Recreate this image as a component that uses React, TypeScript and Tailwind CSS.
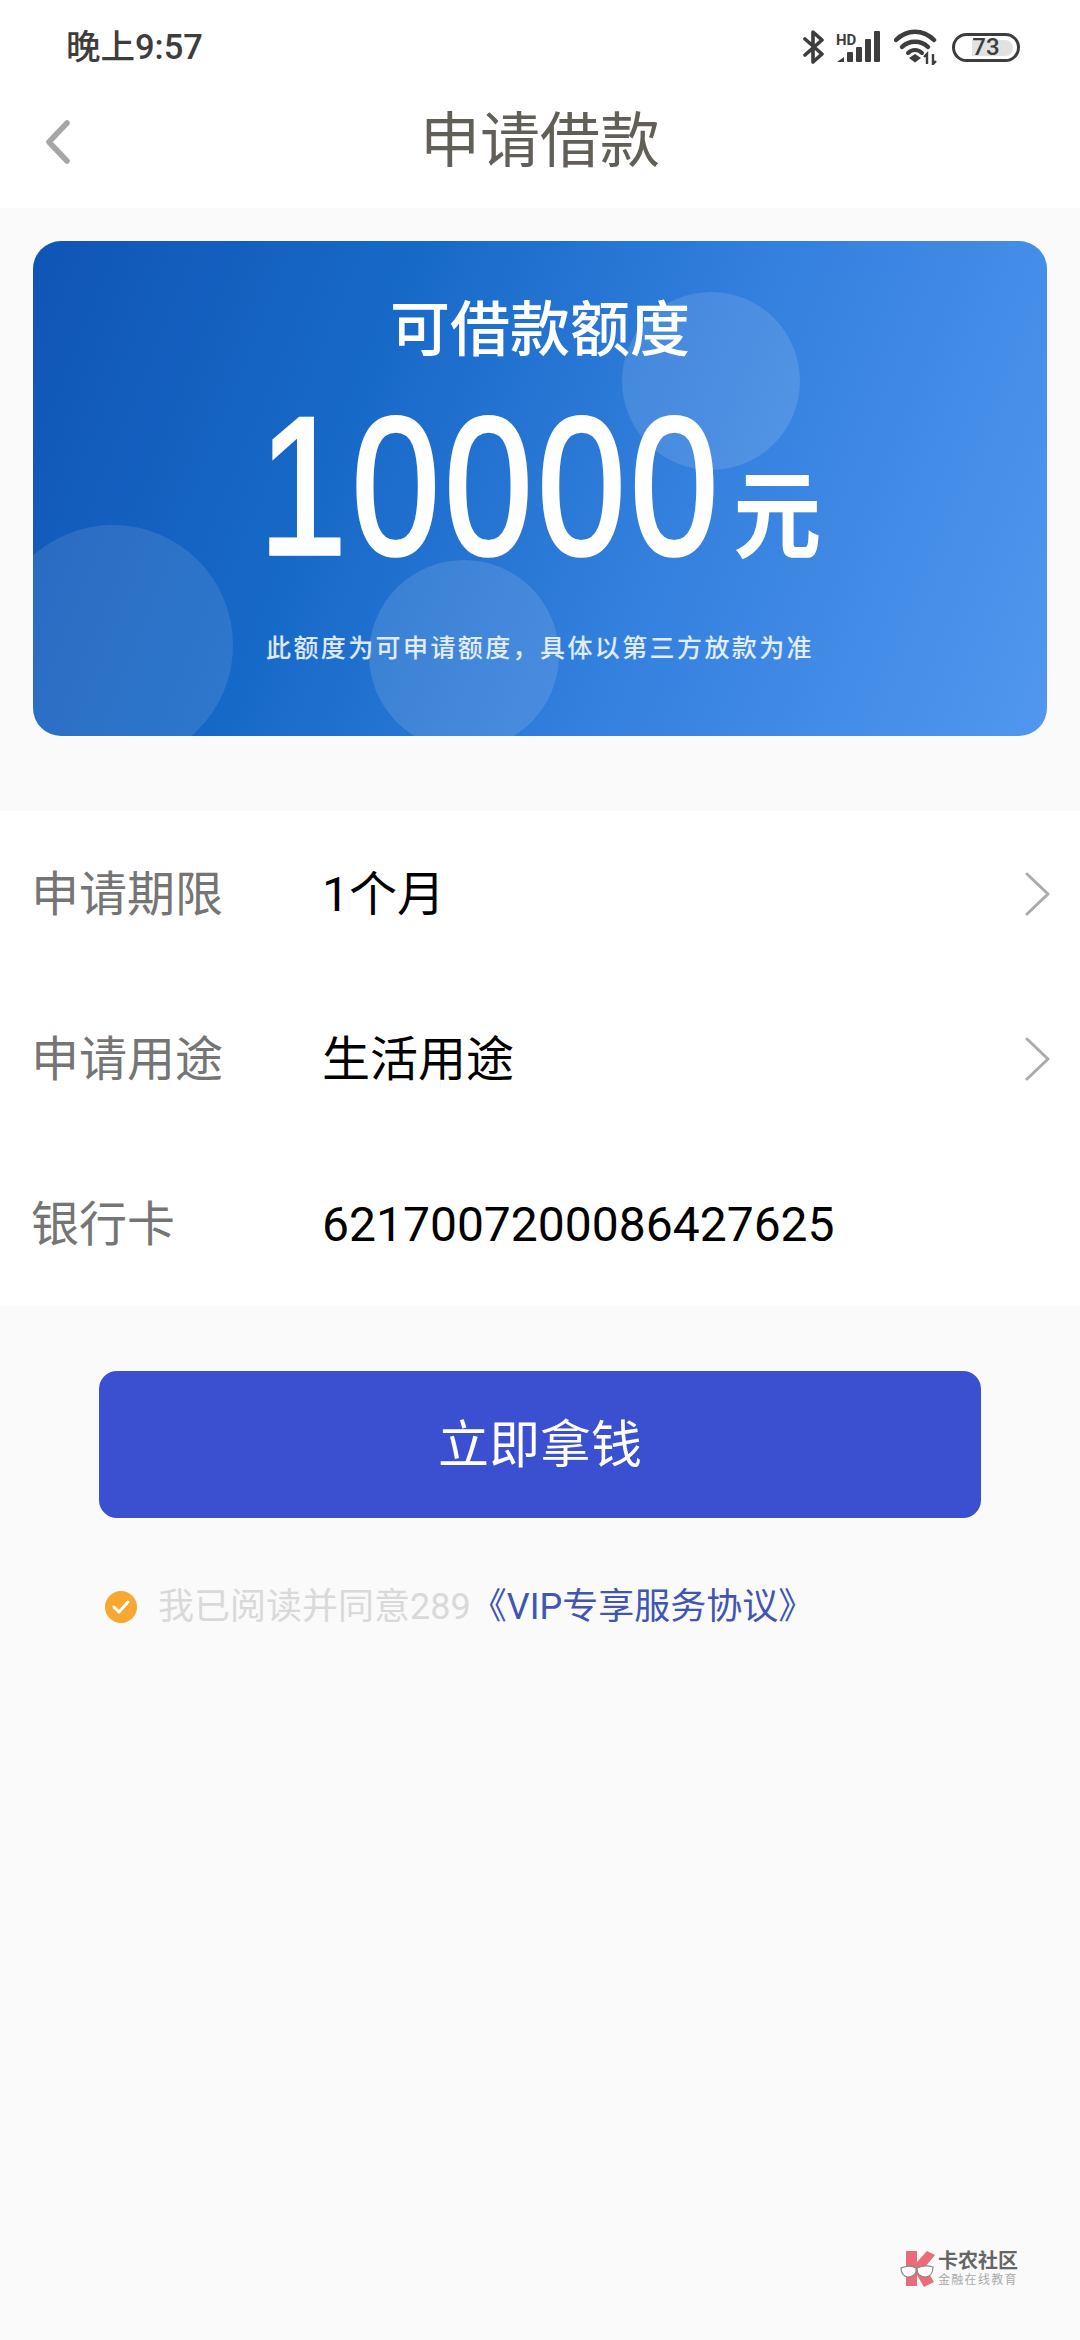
const CJK = "font-['Roboto','Noto_Sans_CJK_SC',sans-serif]";

const StatusIcons = () => (
  <div className="flex items-center text-[#3d3d3d]">
    <svg width="22" height="36" viewBox="0 0 22 36" fill="none" stroke="currentColor" strokeWidth="3.6" strokeLinejoin="round" strokeLinecap="round" className="mr-[11px]">
      <path d="M2 10 L19 25 L10 33 V3 L19 11 L2 26" />
    </svg>
    <svg width="44" height="34" viewBox="0 0 44 34" className="mr-[14px]" fill="currentColor">
      <text x="0" y="15" fontSize="15" fontWeight="700" fontFamily="Roboto, sans-serif">HD</text>
      <path d="M1 32 L8 27 V32 Z" />
      <rect x="11" y="22" width="6" height="10" rx="1" />
      <rect x="20" y="17" width="6" height="15" rx="1" />
      <rect x="29" y="9" width="6" height="23" rx="1" />
      <rect x="38" y="1" width="6" height="31" rx="1" />
    </svg>
    <svg width="44" height="36" viewBox="0 0 44 36" fill="none" className="mr-[14px]">
      <path d="M2 11 C13 0 29 0 40 11" stroke="currentColor" strokeWidth="4.5" strokeLinecap="round" />
      <path d="M8 18 C15 11 27 11 34 18" stroke="currentColor" strokeWidth="4.5" strokeLinecap="round" />
      <path d="M14 24 C18 20 24 20 28 24" stroke="currentColor" strokeWidth="4" strokeLinecap="round" />
      <path d="M15 29 L21 25 L27 29 L21 33.5 Z" fill="currentColor" />
      <path d="M33 35 V25 L30 28 M39 25 V35 L42 32" stroke="currentColor" strokeWidth="2.4" />
    </svg>
    <div className="relative flex h-[29px] w-[68px] items-center justify-center rounded-full border-[3px] border-[#3d3d3d] bg-white">
      <div className="absolute left-[17px] top-[4px] h-[16px] w-[41px] rounded-r-full bg-[#e2e2e2]" />
      <span className={`${CJK} relative text-[24px] leading-none font-medium`}>73</span>
    </div>
  </div>
);

const Chevron = () => (
  <svg width="26" height="44" viewBox="0 0 26 44" fill="none" stroke="#ababab" strokeWidth="3" strokeLinecap="round" strokeLinejoin="round">
    <path d="M2 2 L23 22 L2 42" />
  </svg>
);

const Row = ({ label, value, arrow }: { label: string; value: string; arrow?: boolean }) => (
  <div className="flex h-[165px] items-center pl-[31px] pr-[29px]">
    <div className="mt-[2px] w-[291px] text-[48px] leading-none text-[#757575]">{label}</div>
    <div className="mt-[2px] flex-1 text-[48px] leading-none text-black">{value}</div>
    {arrow && <Chevron />}
  </div>
);

const Watermark = () => (
  <div className="absolute left-[900px] top-[2250px] flex items-center gap-[2px]">
    <svg width="36" height="38" viewBox="0 0 36 38">
      <path d="M6 1 H17 V12 L27 1 L35 5 L25 17 L34 32 L24 37 L17 25 V36 H6 Z" fill="#ec6b78" />
      <path d="M1 18 C8 15 13 16 16 18 C17 24 13 27 8 27 C4 27 1 23 1 18 Z M17 18 C21 16 27 15 33 17 C33 23 30 27 25 27 C20 27 17 24 17 18 Z" fill="#ffffff" stroke="#8a8a8a" strokeWidth="1.2" />
    </svg>
    <div className="flex flex-col items-start">
      <span className="text-[20px] leading-[22px] font-bold text-[#666666]">卡农社区</span>
      <span className="text-[12px] leading-[16px] tracking-[1.3px] text-[#aaaaaa]">金融在线教育</span>
    </div>
  </div>
);

export default function App() {
  return (
    <div className={`${CJK} relative h-[2340px] w-[1080px] overflow-hidden bg-[#fafafa]`}>
      <div className="bg-white">
        <div className="flex h-[94px] items-center justify-between pl-[66px] pr-[60px]">
          <span className="text-[34.5px] leading-none font-medium text-[#3d3d3d]">晚上9:57</span>
          <StatusIcons />
        </div>
        <div className="relative flex h-[114px] items-center justify-center pb-[18px]">
          <svg width="26" height="44" viewBox="0 0 26 44" fill="none" stroke="#a6a6a6" strokeWidth="5.5" strokeLinecap="round" strokeLinejoin="round" className="absolute left-[45px] top-[26px]">
            <path d="M22 3 L4 22 L22 41" />
          </svg>
          <span className="text-[60px] leading-none text-[#625e58]">申请借款</span>
        </div>
      </div>

      <div className="relative ml-[33px] mr-[33px] mt-[33px] flex h-[495px] flex-col items-center overflow-hidden rounded-[28px] bg-[linear-gradient(112deg,#1055b5_0%,#1769c8_32%,#3480de_62%,#5197ef_100%)] text-white">
        <div className="absolute left-[-40px] top-[284px] h-[240px] w-[240px] rounded-full bg-white/10" />
        <div className="absolute left-[336px] top-[319px] h-[190px] w-[190px] rounded-full bg-white/12" />
        <div className="absolute left-[589px] top-[51px] h-[178px] w-[178px] rounded-full bg-white/12" />
        <div className="relative mt-[60px] h-[60px] text-[60px] leading-[60px] font-medium">可借款额度</div>
        <div className="relative mt-[65px] flex h-[120px] items-center">
          <span className="origin-center scale-y-[1.24] font-['Liberation_Sans',sans-serif] text-[158px] leading-none tracking-[5px] [-webkit-text-stroke:3px_white]">10000</span>
          <span className="mt-[54px] ml-[10px] origin-top scale-y-[1.1] text-[88px] leading-none font-bold">元</span>
        </div>
        <div className="relative mt-[88px] h-[30px] text-[25px] leading-[30px] font-medium tracking-[2.4px] text-white/85">
          此额度为可申请额度，具体以第三方放款为准
        </div>
      </div>

      <div className="mt-[75px] bg-white">
        <Row label="申请期限" value="1个月" arrow />
        <Row label="申请用途" value="生活用途" arrow />
        <Row label="银行卡" value="6217007200086427625" />
      </div>

      <div className="mx-[99px] mt-[65px] flex h-[147px] items-center justify-center rounded-[18px] bg-[#3a50d0] pt-[2px] text-[51px] leading-none text-white">
        立即拿钱
      </div>

      <div className="ml-[105px] mt-[59px] flex h-[60px] items-center">
        <svg width="32" height="32" viewBox="0 0 32 32" className="mr-[21px]">
          <circle cx="16" cy="16" r="16" fill="#f6a833" />
          <path d="M9 16 L14 21 L23 11" fill="none" stroke="#fff" strokeWidth="3" strokeLinecap="round" strokeLinejoin="round" />
        </svg>
        <span className="text-[36px] leading-none text-[#d9d9d9]">我已阅读并同意289</span>
        <span className="text-[36px] leading-none text-[#3f56b5]">《VIP专享服务协议》</span>
      </div>

      <Watermark />
    </div>
  );
}
